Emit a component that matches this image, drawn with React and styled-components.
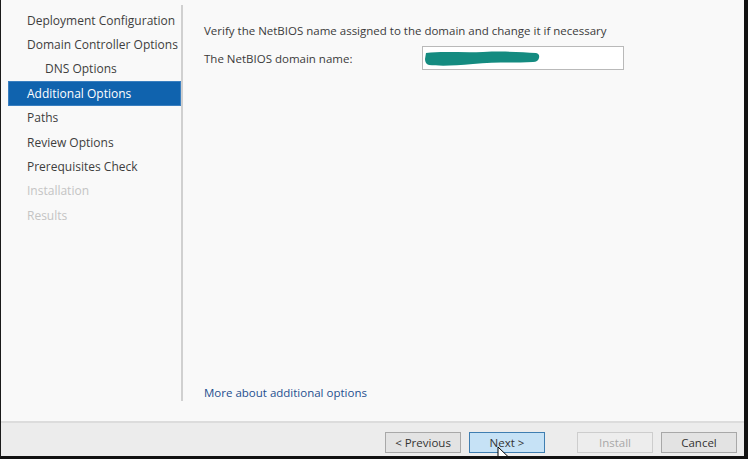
import React from 'react'
import styled, { createGlobalStyle } from 'styled-components'

const GlobalStyle = createGlobalStyle`
  html, body {
    margin: 0;
    padding: 0;
    background: #111;
  }
  * { box-sizing: border-box; }
`

const steps = [
  { label: 'Deployment Configuration' },
  { label: 'Domain Controller Options' },
  { label: 'DNS Options', sub: true },
  { label: 'Additional Options', active: true },
  { label: 'Paths' },
  { label: 'Review Options' },
  { label: 'Prerequisites Check' },
  { label: 'Installation', disabled: true },
  { label: 'Results', disabled: true },
]

function App() {
  return (
    <>
      <GlobalStyle />
      <Window>
        <Main>
          <Sidebar>
            <StepList>
              {steps.map((s) => (
                <Step key={s.label} $active={s.active} $disabled={s.disabled} $sub={s.sub}>
                  {s.label}
                </Step>
              ))}
            </StepList>
            <Divider />
          </Sidebar>

          <Content>
            <Heading>Verify the NetBIOS name assigned to the domain and change it if necessary</Heading>
            <FieldRow>
              <Label>The NetBIOS domain name:</Label>
              <TextBox>
                {/* redacted value, painted over in the screenshot */}
                <svg width="120" height="18" viewBox="0 0 120 18">
                  <path
                    d="M3 4 C 20 2, 40 4, 60 3 S 100 3, 113 4 Q 117 5 116 9 Q 115 13 110 13 C 90 14, 70 13, 50 15 S 15 17, 6 16 Q 2 15 2 10 Z"
                    fill="#148b80"
                  />
                </svg>
              </TextBox>
            </FieldRow>
            <MoreLink>More about additional options</MoreLink>
          </Content>
        </Main>

        <Footer>
          <Button>&lt; Previous</Button>
          <Button $primary>Next &gt;</Button>
          <Button $disabled $gap>Install</Button>
          <Button>Cancel</Button>
          <Cursor width="14" height="20" viewBox="0 0 14 20">
            <path d="M1 1 L1 16 L4.5 12.5 L7 18.5 L9.5 17.5 L7 11.5 L12 11.5 Z" fill="#fff" stroke="#000" strokeWidth="1" />
          </Cursor>
        </Footer>
      </Window>
    </>
  )
}

export default App

const Window = styled.div`
  width: 748px;
  height: 459px;
  background: #f9f9f9;
  border-left: 1px solid #1a1a1a;
  border-right: 4px solid #111;
  border-bottom: 3px solid #111;
  display: flex;
  flex-direction: column;
  font-family: 'Open Sans', 'Noto Sans', sans-serif;
  font-size: 11.5px;
  color: #3b3b3b;
  overflow: hidden;
`

const Main = styled.div`
  flex: 1;
  display: flex;
  border-bottom: 2px solid #dcdcdc;
`

const Sidebar = styled.div`
  width: 182px;
  display: flex;
`

const StepList = styled.div`
  flex: 1;
  padding-top: 8px;
  font-size: 12px;
`

const Step = styled.div`
  height: 24.4px;
  display: flex;
  align-items: center;
  margin-left: 7px;
  padding-left: ${(p) => (p.$sub ? '36px' : '18px')};
  white-space: nowrap;
  color: ${(p) => (p.$active ? '#fff' : p.$disabled ? '#c4c4c4' : '#3e3e3e')};
  background: ${(p) => (p.$active ? '#1063ae' : 'transparent')};
  border: 1px solid ${(p) => (p.$active ? '#3a7fc0' : 'transparent')};
`

const Divider = styled.div`
  width: 2px;
  margin: 5px 0 20px;
  background: #d0d0d0;
`

const Content = styled.div`
  flex: 1;
  display: flex;
  flex-direction: column;
  padding: 23px 0 20px 21px;
`

const Heading = styled.div`
  line-height: 16px;
  white-space: nowrap;
`

const FieldRow = styled.div`
  display: flex;
  align-items: center;
  margin-top: 7px;
`

const Label = styled.div`
  width: 218px;
`

const TextBox = styled.div`
  width: 202px;
  height: 24px;
  background: #fff;
  border: 1px solid #b9b9b9;
  display: flex;
  align-items: center;
`

const MoreLink = styled.a`
  margin-top: auto;
  color: #1f4f8f;
  cursor: pointer;
  line-height: 16px;
`

const Footer = styled.div`
  position: relative;
  height: 33px;
  background: #ececec;
  display: flex;
  justify-content: flex-end;
  align-items: flex-start;
  gap: 8px;
  padding: 9px 7px 0 0;
`

const Button = styled.button`
  width: 76px;
  height: 21px;
  margin-left: ${(p) => (p.$gap ? '24px' : '0')};
  font-family: inherit;
  font-size: 11.5px;
  padding: 0;
  color: ${(p) => (p.$disabled ? '#a8a8a8' : '#333')};
  background: ${(p) => (p.$primary ? '#c6e2f6' : p.$disabled ? '#ededed' : '#e3e3e3')};
  border: 1px solid ${(p) => (p.$primary ? '#3f7eb1' : p.$disabled ? '#cdcdcd' : '#a8a8a8')};
`

const Cursor = styled.svg`
  position: absolute;
  left: 496px;
  top: 23px;
`
